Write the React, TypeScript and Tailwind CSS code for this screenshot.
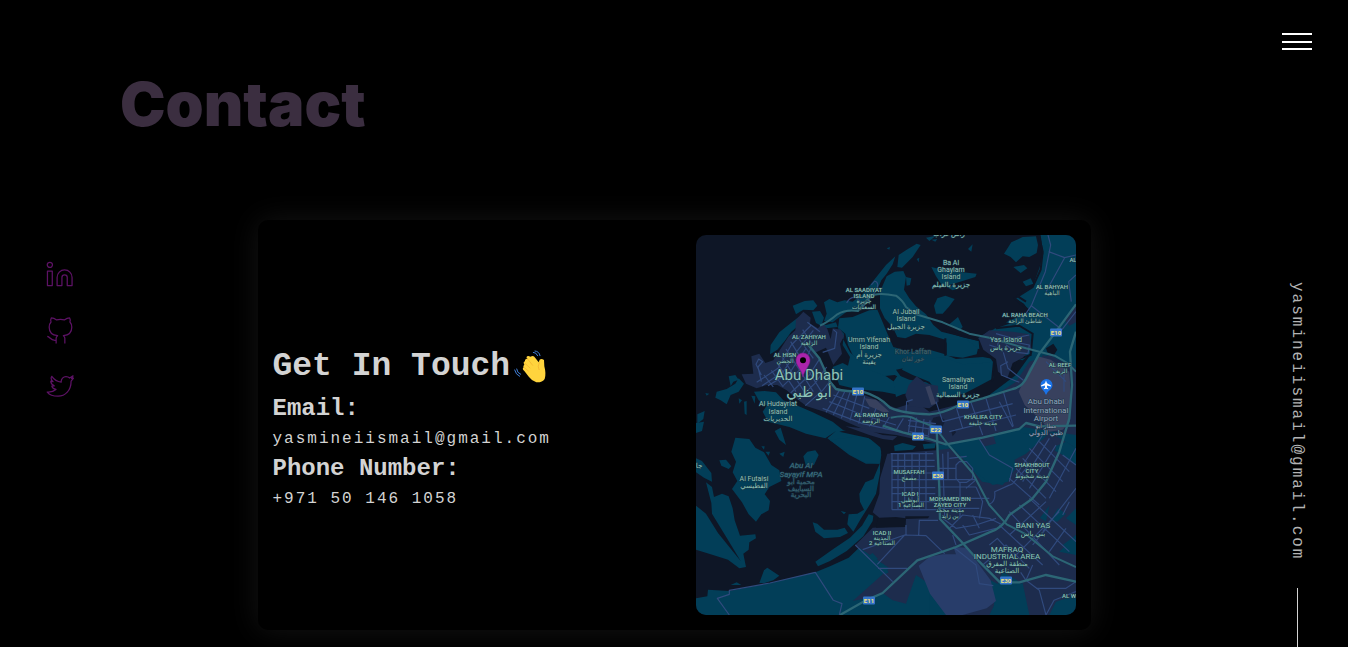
import React from "react";

const water = "#0e1626";
const land = "#023e58";
const urban = "#1d2c4d";
const street = "#304a7d";
const highway = "#2c6675";
const muted = "#98a5be";

type Label = { x: number; y: number; t: string; s?: number; c?: string; i?: boolean };

const labels: Label[] = [
  { x: 168, y: 57, t: "AL SAADIYAT" },
  { x: 168, y: 63, t: "ISLAND" },
  { x: 168, y: 68, t: "جزيرة" },
  { x: 168, y: 74, t: "السعديات" },
  { x: 253, y: 1, t: "راس غراب", s: 7 },
  { x: 255, y: 30, t: "Ba Al", s: 7 },
  { x: 255, y: 37, t: "Ghaylam", s: 7 },
  { x: 255, y: 44, t: "Island", s: 7 },
  { x: 255, y: 52, t: "جزيرة بالغيلم", s: 7 },
  { x: 377, y: 27, t: "AL" },
  { x: 356, y: 54, t: "AL BAHYAH" },
  { x: 356, y: 60, t: "الباهية" },
  { x: 329, y: 82, t: "AL RAHA BEACH" },
  { x: 329, y: 88, t: "شاطئ الراحة" },
  { x: 210, y: 79, t: "Al Jubail", s: 7 },
  { x: 210, y: 86, t: "Island", s: 7 },
  { x: 210, y: 94, t: "جزيرة الجبيل", s: 7 },
  { x: 113, y: 104, t: "AL ZAHIYAH" },
  { x: 113, y: 110, t: "الزاهية" },
  { x: 173, y: 107, t: "Umm Yifenah", s: 7 },
  { x: 173, y: 114, t: "Island", s: 7 },
  { x: 173, y: 122, t: "جزيرة أم", s: 7 },
  { x: 173, y: 129, t: "يفينة", s: 7 },
  { x: 89, y: 122, t: "AL HISN" },
  { x: 89, y: 128, t: "الحصن" },
  { x: 217, y: 119, t: "Khor Laffan", s: 7, c: "#3f6670" },
  { x: 217, y: 126, t: "خور لفان", s: 6, c: "#3f6670" },
  { x: 310, y: 107, t: "Yas Island", s: 7 },
  { x: 310, y: 115, t: "جزيرة ياس", s: 7 },
  { x: 364, y: 132, t: "AL REEF" },
  { x: 364, y: 138, t: "الريف" },
  { x: 113, y: 145, t: "Abu Dhabi", s: 15 },
  { x: 113, y: 162, t: "أبو ظبي", s: 14 },
  { x: 82, y: 171, t: "Al Hudayriat", s: 7 },
  { x: 82, y: 179, t: "Island", s: 7 },
  { x: 82, y: 186, t: "الحديريات", s: 7 },
  { x: 175, y: 182, t: "AL RAWDAH" },
  { x: 175, y: 188, t: "الروضة" },
  { x: 262, y: 147, t: "Samaliyah", s: 7 },
  { x: 262, y: 154, t: "Island", s: 7 },
  { x: 262, y: 162, t: "جزيرة السمالية", s: 7 },
  { x: 287, y: 184, t: "KHALIFA CITY" },
  { x: 287, y: 190, t: "مدينة خليفة" },
  { x: 350, y: 169, t: "Abu Dhabi", s: 8, c: muted },
  { x: 350, y: 178, t: "International", s: 8, c: muted },
  { x: 350, y: 186, t: "Airport", s: 8, c: muted },
  { x: 350, y: 193, t: "مطار أبو", s: 6, c: muted },
  { x: 350, y: 200, t: "ظبي الدولي", s: 7, c: muted },
  { x: 58, y: 246, t: "Al Futaisi", s: 7 },
  { x: 58, y: 253, t: "الفطيسي", s: 7 },
  { x: 105, y: 233, t: "Abu Al", s: 8, c: "#3d7180", i: true },
  { x: 105, y: 242, t: "Sayayif MPA", s: 8, c: "#3d7180", i: true },
  { x: 105, y: 249, t: "محمية أبو", s: 7, c: "#37606f" },
  { x: 105, y: 256, t: "السياييف", s: 7, c: "#37606f" },
  { x: 105, y: 262, t: "البحرية", s: 7, c: "#37606f" },
  { x: 213, y: 239, t: "MUSAFFAH" },
  { x: 213, y: 245, t: "مصفح" },
  { x: 214, y: 261, t: "ICAD I" },
  { x: 214, y: 267, t: "أبوظبي" },
  { x: 215, y: 272, t: "الصناعية 1" },
  { x: 254, y: 266, t: "MOHAMED BIN" },
  { x: 254, y: 272, t: "ZAYED CITY" },
  { x: 254, y: 277, t: "مدينة محمد" },
  { x: 254, y: 283, t: "بن زايد" },
  { x: 336, y: 232, t: "SHAKHBOUT" },
  { x: 336, y: 238, t: "CITY" },
  { x: 336, y: 243, t: "مدينة شخبوط" },
  { x: 186, y: 300, t: "ICAD II" },
  { x: 186, y: 305, t: "المدينة" },
  { x: 186, y: 310, t: "الصناعية 2" },
  { x: 337, y: 293, t: "BANI YAS", s: 8 },
  { x: 337, y: 301, t: "بني ياس", s: 7 },
  { x: 311, y: 317, t: "MAFRAQ", s: 8 },
  { x: 311, y: 324, t: "INDUSTRIAL AREA", s: 8 },
  { x: 311, y: 331, t: "منطقة المفرق", s: 7 },
  { x: 311, y: 338, t: "الصناعية", s: 7 },
  { x: 373, y: 363, t: "AL W" },
  { x: 3, y: 233, t: "جا", s: 7 },
];

const shields: { x: number; y: number; t: string }[] = [
  { x: 162, y: 156, t: "E10" },
  { x: 360, y: 97, t: "E10" },
  { x: 267, y: 169, t: "E10" },
  { x: 240, y: 194, t: "E22" },
  { x: 222, y: 201, t: "E20" },
  { x: 242, y: 240, t: "E30" },
  { x: 310, y: 345, t: "E30" },
  { x: 173, y: 365, t: "E11" },
];

function Terrain() {
  return (
    <>
      {/* islands north of the city */}
      <g fill={land}>
        <path d="M598 64L590 88L572 116L556 136L546 160L530 186L500 204L486 226L450 232L410 262L384 258L392 236L384 202L400 192L424 202L446 196L470 200L500 176L524 148L546 120L570 90Z" />
        <path d="M552 170L572 124L596 110L622 108L630 126L624 164L640 190L660 214L690 238L712 270L736 290L800 306L848 318L850 342L756 334L748 314L700 300L660 296L628 310L604 306L590 276L566 250L552 220Z" />
        <path d="M430 250L470 246L520 226L544 224L560 262L576 300L592 336L640 350L706 346L742 356L780 372L860 366L892 372L890 432L850 424L780 416L700 404L640 396L600 404L620 432L596 420L560 424L520 410L490 380L470 360L456 330L448 296L426 278Z" />
        <path d="M752 312L812 314L846 340L842 358L800 368L752 362Z" />
        <path d="M290 212L326 198L352 196L364 212L352 226L322 224L300 238Z" />
        <path d="M222 358L224 330L250 292L280 268L308 246L318 262L286 290L266 318L244 344Z" />
        <path d="M348 230L372 228L384 248L378 266L390 270L420 262L430 290L440 310L462 352L486 374L520 404L570 424L600 444L610 480L560 470L480 462L430 450L410 396L440 384L456 392L462 366L440 330L444 296L424 276L390 280L360 264Z" />
        <path d="M592 440L606 420L640 434L690 442L720 458L712 478L670 468L620 478L600 486Z" />
        <path d="M632 370L700 372L740 366L800 388L860 384L888 380L892 430L850 452L808 474L770 486L730 480L700 440L650 420L618 404Z" />
        <path d="M706 96L740 104L800 112L842 116L838 126L800 138L760 150L790 160L770 166L736 148L720 124Z" />
        <path d="M724 190L748 182L776 192L760 214L740 236L720 236L714 212Z" />
        <path d="M946 22L980 6L1020 4L1026 30L1022 54L1000 66L980 64L960 82L944 66L924 56Z" />
        <path d="M760 268L786 246L800 276L790 288Z M690 8L720 2L700 18Z M816 42L830 28L826 50Z M662 72L670 68L668 82Z M952 96L984 90L994 100L974 114Z M980 140L1004 130L1012 146L990 154Z M706 14L724 12L718 20Z" />
        <path d="M572 40L582 36L580 44Z M608 60L632 44L662 26L674 30L650 66L618 98L604 96Z M630 126L646 130L642 150L632 152Z" />
      </g>

      {/* Hudayriat and the western islets */}
      <g fill={land}>
        <path d="M174 470L206 468L240 472L262 496L300 510L350 532L410 560L440 584L500 600L552 628L556 660L552 686H510L460 660L394 610L420 588L388 610L330 596L280 576L216 560L200 530L212 512L188 496Z" />
        <path d="M62 470L92 462L118 446L128 430L144 446L128 470L104 480L92 508L74 496L58 488Z M98 424L118 420L128 434L112 440L104 454Z M4 538L26 528L22 552L4 566Z M144 500L152 498L152 540L146 536Z M128 490L138 496L130 506Z M28 474L40 476L32 482Z M166 482L178 484L176 506Z" />
        <path d="M446 610L500 600L544 626L556 650L550 686L506 682L470 662L400 614Z" />
        <path d="M118 608L160 612L178 638L204 652L226 690L250 706L256 738L220 756L206 778L222 798L218 826L196 838L180 860L158 838L138 802L108 762L124 738L110 712L120 680L106 650Z" />
        <path d="M236 588L254 578L270 630L250 614Z M322 664L334 650L358 646L368 660L354 690L330 694Z M70 676L90 674L106 694L98 702L76 692Z M196 634L206 634L204 644Z M208 650L222 650L218 662Z M250 656L266 650L262 666Z" />
        <path d="M0 670L18 678L46 714L48 740L24 728L0 712Z M0 564L24 560L18 588L0 594Z" />
        <path d="M30 742L48 756L54 786L78 776L98 784L110 820L116 856L132 902L178 898L180 910L160 922L158 944L142 956L150 996L130 1000L96 974L44 958L0 944V812L30 836L66 894L134 978L92 908L48 836L46 804Z" />
        <path d="M190 1044L204 1006L214 998L250 1022L232 1036L206 1044Z M104 1050L122 1042L136 1050Z" />
        <path d="M350 862L364 866L384 884L424 884L446 878L456 894L432 906L384 910L358 890Z M434 828L450 832L444 838Z" />
        <path d="M490 776L508 742L532 732L552 684L552 714L540 776L522 808L494 852L472 890L454 868L458 838L484 836L504 824L492 800Z" />
        <path d="M358 980L412 942L462 908L498 872L518 838L532 842L530 858L502 904L452 948L402 978L366 994Z" />
        <path d="M0 1090L34 1084L36 1064L100 1068L222 1044L358 1012L402 994L458 968L500 928L530 900L760 900V1140H0Z" />
      </g>

      {/* eastern mainland */}
      <path fill={land} d="M1034 0H1140V1140H700V640L760 560L880 480L960 420L1010 350L1000 290L960 270L930 262L1000 230L984 206L958 190L1010 154L1030 100L1042 56Z" />
      <path fill={land} d="M846 310L870 294L900 280L940 266L1000 276L1012 300L1010 350L980 376L940 370L900 350Z" />
      <path d="M1028 0L1040 50L1034 104L1010 156L956 190L998 226M962 182L990 200M748 310V362M880 360L894 380L888 440M852 316L800 304L740 284M950 404L962 374L1004 360L1010 296L970 272L900 280" fill="none" stroke={water} strokeWidth="6" />
      <path fill={water} d="M1050 340L1072 326L1084 344L1074 360L1054 352Z M580 560L620 600L700 604L730 618L720 648L580 652L560 700L556 640L520 610L430 590L480 578Z" />
      <path fill={land} d="M594 632L620 624L660 634L650 644L596 648Z M680 628L720 624L716 640L684 642Z" />

      {/* built-up areas */}
      <g fill={urban}>
        <path d="M137 418L172 416L166 364L190 356L208 384L232 376L252 344L278 304L298 286L300 254L322 230L344 248L342 266L366 280L380 264L394 282L404 312L410 280L434 284L444 304L432 326L438 356L412 390L390 338L360 352L380 392L406 440L424 464L482 470L540 494L600 520L660 500L700 530L900 480L960 440L1000 380L1060 360L1140 400V600L980 576L880 600L740 630L600 600L520 590L450 560L390 532L332 514L300 490L272 466L244 450L212 450L182 460L150 446Z" />
        <path d="M638 450L662 424L690 446L726 452L728 500L700 520L640 514L628 480Z" />
        <path d="M848 310L880 286L950 290L1000 298L1006 340L980 368L950 384L934 430L906 410L900 372L862 344Z" />
        <path d="M1106 254L1140 206V262L1120 272Z M1040 360L1140 400V440H1020Z" />
        <path d="M448 574L500 580L560 600L604 604L590 616L560 612L520 600Z" />
        <path d="M574 656L720 646L770 640L810 680L858 740L920 750L960 700L1020 640L1060 590L1140 640V900L1100 930L1140 960V1080L1080 1100L1060 1140H1000L970 1040L920 1010L900 1060L890 1140H760L690 1040L660 1020L630 1106L590 1096L560 1074L500 1092L470 1098L520 1054L580 1000L478 930L530 878L628 874L630 850L600 846L550 848L530 832L550 776L552 730Z" />
      </g>
      <path fill={water} d="M546 850L628 852V876L540 878Z M628 844L700 844L696 850L628 852Z" />
      <path fill={land} d="M516 964L530 954L546 972L530 980Z M548 988L562 986L578 1012L568 1018L544 1000Z M1090 950L1140 900V870L1110 850L1140 820V960Z M1064 856L1086 820L1110 836L1084 860Z M1032 848L1060 812L1050 860Z M1064 640L1100 660L1140 690V640L1110 620Z M852 1020L900 1044L930 1060L980 1044L1000 1140H880L900 1100Z" />
      <path fill={land} d="M900 600L950 584L1000 600L1040 610L1000 656L960 690L936 740L890 750L850 720L800 660L760 634Z" />
      <path fill={urban} d="M840 604L890 596L900 626L866 634Z M956 674L990 656L1030 620L1060 600L1080 640L1020 740L960 740Z" />
      <path fill={water} d="M712 548L730 544L748 556L740 574L720 570L706 562Z M766 590L776 582L780 592L770 604Z" opacity="0.65" />
      <path fill="#283d6a" d="M668 992L700 966L740 958H780L772 936L812 938L850 990L884 1036L900 1098L872 1120L800 1140H750L702 1076Z" />
      <path fill="#38415e" d="M968 470L1000 400L1026 364L1064 374L1120 410L1122 440V560L1100 584L1060 590L1040 560L986 510Z M688 456L702 452L720 506L706 510Z M506 490L540 494L580 530L562 532L520 514Z" />
    </>
  );
}

function Streets() {
  return (
    <>
      <g fill="none" stroke={street} strokeWidth="3.500" strokeLinejoin="round">
        {/* city island */}
        <path d="M182 442L246 400L286 330L346 270M198 452L262 410L302 350L352 286M216 452L282 412L330 340M262 452L316 400L350 330M284 474L340 420L372 370M306 494L356 446L392 396M328 512L380 466L404 436M204 420L232 456M226 406L262 456M246 388L300 470M258 366L330 478M270 342L352 470M284 320L376 470M300 300L352 370M320 284L350 330M334 262L372 290" />
        <path d="M196 440L186 396L200 380L188 372L180 388L196 420M380 352L416 340L422 292L412 284M452 204Q462 184 482 188L502 214L540 168Q552 142 536 138L526 150M500 204L516 196L512 184" />
        {/* Rawdah */}
        <path d="M390 532L430 466M412 540L446 470M436 550L462 472M462 556L484 474M488 566L506 484M400 500L500 540L600 570M412 480L520 520M380 520L500 566L620 592M520 574L540 520M560 580L580 546M600 586L622 550" />
        <path d="M636 556L720 566M636 572L716 584M640 590L700 604M644 548L636 600M662 548L656 606M684 552L678 606M702 556L698 600" />
        {/* Yas */}
        <path d="M920 350Q880 310 950 320L1000 330L996 356L962 352L930 330M922 352L936 400L982 436M936 380L914 392L916 420L970 442M900 296L950 310L1000 300M880 330L910 340" />
        {/* Khalifa City */}
        <path d="M720 500L740 560M780 514L800 580M824 500L860 600M870 490L900 588M922 470L952 574M740 560L950 506M760 590L960 540M630 530L632 500L650 494M950 576L910 500" />
        {/* north-east */}
        <path d="M1056 0L1064 30L1048 110L1006 212L1098 284M1058 50L1106 68L1140 60M1106 68L1050 170M1140 120L1118 140L1126 200M1006 212L980 250M1098 284L1140 230M1104 400L1104 470M1050 380L1110 440" />
        {/* Musaffah */}
        <path d="M584 656H712M586 676H716M586 694H716M586 714H716M586 734H840M586 758H718M586 776H718M586 800H718M588 824H720M588 656V824M606 656V824M626 656V824M648 656V824M670 656V824M690 650V824M740 656L746 850M756 650V736" />
        <path d="M726 700H780M726 756H840M726 790H880M726 820H850M780 690L790 680H812L830 700V730L812 742H790L780 730ZM792 740V850M760 670L812 664M810 760L838 736M840 756L860 800L850 850" />
        {/* Mohamed bin Zayed and Bani Yas */}
        <path d="M740 850L780 880L840 870L900 850M760 880L800 840L880 850L920 870M770 900L780 930M800 870L820 900L900 880M830 840L850 880M880 808Q900 800 896 770L950 746L1000 690M896 770L940 750M850 612L880 660L950 700L940 740" />
        <path d="M500 944L626 900L690 902L746 956M668 902L670 856H726M544 988L626 900M478 930L590 1040M546 1000L634 1000M630 870V900" />
        <path d="M1000 640L1100 740M980 670L1080 770M960 700L1050 790M940 730L1030 810M1030 620L1120 710M1040 600L960 720M1060 610L980 740M1080 630L1000 760M1100 660L1140 690" />
        <path d="M940 830L1090 990M970 810L1120 950M1000 790L1140 920M910 870L1040 990M1060 870L1010 930M1090 830L960 960M1050 800L940 900M1110 880L1060 950M1140 760L1040 890M1140 640L1060 790M1120 800L1100 840" />
        <path d="M880 930L904 910L950 960M860 990L930 930L1000 1000M772 936L840 990L850 1046L892 1052M990 1036L1030 1066L1050 1140M1010 990L990 1036L974 1012M1050 1140L1074 1096L1140 1070M1020 1060L1110 1060L1140 1040" />
        <path d="M100 1140L64 1090L100 1078V1066L222 1044L358 1012L412 1096L438 1106L430 1140" />
      </g>
      <g fill="none" stroke={highway} strokeWidth="7" strokeLinejoin="round">
        <path strokeWidth="6" d="M372 272Q396 262 424 238Q450 222 486 228L520 186Q540 170 600 182Q620 196 630 216L660 238L740 262L820 296L880 308L990 340L1076 362L1114 384L1140 410" />
        <path d="M334 326L370 370L402 440L420 462Q450 470 500 470Q550 484 582 518Q620 536 700 538Q740 536 790 510L860 490L950 462Q980 456 994 424L1030 356L1080 290L1140 208" />
        <path d="M1140 290L1122 350L1128 450L1120 550L1090 650L1050 740L1008 792L940 840Q920 880 880 892L780 936L664 976L560 1074L510 1096L432 1140" />
        <path d="M560 572L620 592L700 612L750 628L860 608L970 582L990 564L1030 574L1140 572" />
        <path d="M722 584L730 760L732 852L800 924L850 980L912 1042H970L1050 1020L1140 1040" />
        <path strokeWidth="6" d="M584 548Q640 536 664 556L716 576L756 628L830 714L880 810L932 868L990 898L1070 964L1140 996" />
      </g>
    </>
  );
}

function AbuDhabiMap() {
  return (
    <svg viewBox="0 0 380 380" role="img" aria-label="Map of Abu Dhabi" className="block w-full rounded-[10px]">
      <rect width="380" height="380" fill={water} />
      <g transform="scale(0.33333)">
        <Terrain />
        <Streets />
      </g>
      <g
        textAnchor="middle"
        fontFamily="Roboto, 'DejaVu Sans', sans-serif"
        stroke="#1a3646"
        strokeWidth="1"
        paintOrder="stroke"
        strokeLinejoin="round"
      >
        {labels.map((l, n) => (
          <text
            key={n}
            x={l.x}
            y={l.y}
            fontSize={l.s ?? 6}
            fontWeight={l.s ? 400 : 500}
            fontStyle={l.i ? "italic" : "normal"}
            fill={l.c ?? "#8ec3b9"}
          >
            {l.t}
          </text>
        ))}
      </g>
      <g textAnchor="middle" fontFamily="Roboto, sans-serif" fontSize="6" fontWeight="700">
        {shields.map((s, n) => (
          <g key={n}>
            <rect x={s.x - 6} y={s.y - 3.5} width="12" height="8" rx="1" fill="#3474c8" />
            <text x={s.x} y={s.y + 2.5} fill="#f3e37a">{s.t}</text>
          </g>
        ))}
      </g>
      <path d="M350 160Q349 157 346 154A6 6 0 1 1 355 154Q351 157 350 160Z" fill="#1a73e8" />
      <path d="M350 145.500L351 148.300L355 150.500V151.500L351 150.500V152.500L352.200 153.500V154.200L350 153.700L347.800 154.200V153.500L349 152.500V150.500L345 151.500V150.500L349 148.300Z" fill="#fff" />
      <path d="M107 142C106 135 100 131 100 125A7 7 0 0 1 114 125C114 131 108 135 107 142Z" fill="#aa24ab" stroke="#8a168e" strokeWidth="0.5" />
      <circle cx="107" cy="125.300" r="3" fill="#000" />
    </svg>
  );
}

function WavingHand() {
  return (
    <svg viewBox="0 0 126 126" aria-label="Waving hand" role="img" className="size-[42px] shrink-0">
      <path
        d="M41 64Q38 59 43 56Q38 48 45 46Q44 37 53 38L49 34Q53 27 61 32L65 31Q71 28 76 36L86 49L89 41Q94 36 102 42L103 61Q109 84 104 99Q97 110 79 109Q67 106 57 93L43 75Q35 69 41 64Z"
        fill="#ffd43d"
      />
      <path d="M42 64L55 75M44 51L60 66M52 38L68 58M88 50Q81 61 87 71" fill="none" stroke="#f3ac2d" strokeWidth="2" strokeLinecap="round" />
      <path d="M70 19Q79 19 83 29M75 15Q88 16 90 29M20 69Q21 81 32 85M14 72Q17 86 29 91" fill="none" stroke="#407fd8" strokeWidth="3" strokeLinecap="round" />
    </svg>
  );
}

const socials = [
  {
    name: "LinkedIn",
    href: "https://www.linkedin.com",
    d: "M4 1.300a2.700 2.700 0 1 1 0 5.400a2.700 2.700 0 0 1 0-5.400ZM1.500 10.500H6.500V25.500H1.500ZM11.500 25.500V17a7.750 7.750 0 0 1 15.500 0V25.500H22V17a2.750 2.750 0 0 0-5.500 0V25.500Z",
  },
  {
    name: "GitHub",
    href: "https://github.com",
    d: "M10.500 27.500V22C10.500 20.500 11 20 12 19.300C6.500 18.700 3.300 15.500 3.300 10.500C3.300 8.300 4 6.500 5.200 5.200C4.600 3.700 4.800 2.200 5.500 1C7.500 1 9.300 1.800 11 3Q15 2 19 3C20.700 1.800 22.500 1 24.500 1C25.200 2.200 25.400 3.700 24.800 5.200C26 6.500 26.700 8.300 26.700 10.500C26.700 15.500 23.500 18.700 18 19.300C19 20 19.500 20.500 19.500 22V27.500M1.300 20C4.500 20.500 4.500 25 10.500 24",
  },
  {
    name: "Twitter",
    href: "https://twitter.com",
    d: "M1.300 19.700C4 19.900 7.500 19.500 10.300 17C8 16.500 6.500 15.500 6 13.500L8.500 13.300C6 12 4.800 10.500 5 8.500L7.300 9C5 7 5 5 6 3.500C8.500 7 12 9 15.700 9.500C15.500 6 18 3.800 20.700 3.800C22.500 3.800 23.800 4.500 24.500 5.200L28 3L26.500 5.700L28.500 5.300L26 8.500C26 18 20 24 12.500 24C8 24 3.500 22.500 1.300 19.700Z",
  },
];

export default function App() {
  return (
    <div className="flex min-h-screen bg-black font-['Liberation_Mono',monospace] text-[#d3d3d3]">
      <aside className="flex w-[120px] shrink-0 flex-col items-center justify-center gap-7 pt-3.5">
        {socials.map((s) => (
          <a key={s.name} href={s.href} aria-label={s.name} className="text-[#5d1265]">
            <svg viewBox="0 0 29 29" className="size-7" fill="none" stroke="currentColor" strokeWidth="1.300" strokeLinejoin="round">
              <path d={s.d} />
            </svg>
          </a>
        ))}
      </aside>

      <main className="flex flex-1 flex-col pt-[68px] pb-4">
        <h1 className="font-[Inter,sans-serif] text-[61px] leading-[72px] font-black text-[#3b2e40]">Contact</h1>
        <section className="mx-auto mt-20 grid w-full max-w-[833px] grid-cols-[1fr_380px] items-center rounded-[10px] bg-black p-[15px] shadow-[0_0_30px_#141414]">
          <div className="pt-1.5">
            <div className="mb-0.5 flex items-center">
              <h2 className="text-[33px] leading-[44px] font-bold">Get In Touch</h2>
              <WavingHand />
            </div>
            <h3 className="text-2xl leading-9 font-bold">Email:</h3>
            <p className="text-base leading-6 tracking-[2px]">yasmineiismail@gmail.com</p>
            <h3 className="text-2xl leading-9 font-bold">Phone Number:</h3>
            <p className="text-base leading-6 tracking-[2px]">+971 50 146 1058</p>
          </div>
          <AbuDhabiMap />
        </section>
      </main>

      <aside className="flex w-[120px] shrink-0 flex-col items-center pt-[33px] pl-[18px]">
        <button type="button" aria-label="Open menu" className="flex h-[17px] w-[30px] flex-col justify-between">
          <span className="h-0.5 w-full bg-white" />
          <span className="h-0.5 w-full bg-white" />
          <span className="h-0.5 w-full bg-white" />
        </button>
        <a href="mailto:yasmineiismail@gmail.com" className="mt-auto text-base leading-6 tracking-[2px] text-[#b4b4b4] [writing-mode:vertical-rl]">
          yasmineiismail@gmail.com
        </a>
        <span className="mt-7 h-[59px] w-px bg-[#d3d3d3]" />
      </aside>
    </div>
  );
}
